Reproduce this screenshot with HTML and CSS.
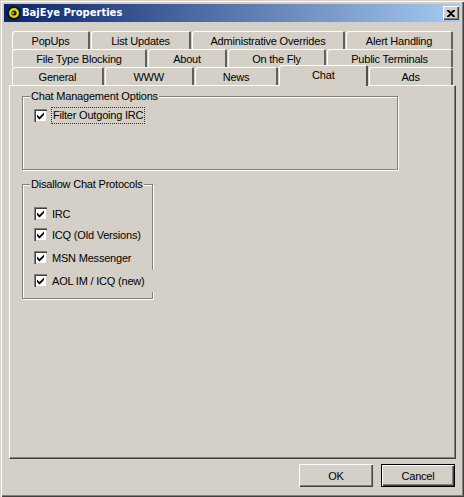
FILE: index.html
```html
<!DOCTYPE html>
<html lang="en">
<head>
    <meta charset="UTF-8">
    <title>BajEye Properties</title>
    <link rel="stylesheet" href="styles.css">
</head>
<body>
    <div class="window">
        <div class="titlebar">
            <svg class="appicon" width="16" height="16" viewBox="0 0 16 16">
                <circle cx="8" cy="8" r="7" fill="#111"/>
                <circle cx="8" cy="8" r="5" fill="#d8d820"/>
                <circle cx="8" cy="8" r="2.6" fill="#222"/>
                <circle cx="7" cy="8" r="1" fill="#d8d820"/>
            </svg>
            <span class="titletext">BajEye Properties</span>
            <div class="closebtn">
                <svg width="8" height="7" viewBox="0 0 8 7">
                    <path d="M0 0h2l2 2 2-2h2v1L5 3.500 8 6v1H6L4 5 2 7H0V6l3-2.500L0 1z" fill="#000"/>
                </svg>
            </div>
        </div>

        <div class="tabs">
            <div class="tabrow">
                <div class="tab w78">PopUps</div>
                <div class="tab w101">List Updates</div>
                <div class="tab w154">Administrative Overrides</div>
                <div class="tab w108">Alert Handling</div>
            </div>
            <div class="tabrow">
                <div class="tab w135">File Type Blocking</div>
                <div class="tab w80">About</div>
                <div class="tab w99">On the Fly</div>
                <div class="tab w127">Public Terminals</div>
            </div>
            <div class="tabrow lastrow">
                <div class="tab w92">General</div>
                <div class="tab w90">WWW</div>
                <div class="tab w85">News</div>
                <div class="tab w89 valgt">Chat</div>
                <div class="tab w85">Ads</div>
            </div>
        </div>

        <div class="panel">
            <div class="group group-mgmt">
                <span class="grouplabel">Chat Management Options</span>
                <label class="check">
                    <span class="box"><svg width="9" height="9" viewBox="0 0 9 9"><path d="M1 3.500l2.500 2.500L8 1.500V4L3.500 8.500 1 6z" fill="#000"/></svg></span>
                    <span class="focus">Filter Outgoing IRC</span>
                </label>
            </div>
            <div class="group group-proto">
                <span class="grouplabel">Disallow Chat Protocols</span>
                <label class="check">
                    <span class="box"><svg width="9" height="9" viewBox="0 0 9 9"><path d="M1 3.500l2.500 2.500L8 1.500V4L3.500 8.500 1 6z" fill="#000"/></svg></span>
                    <span>IRC</span>
                </label>
                <label class="check gap8">
                    <span class="box"><svg width="9" height="9" viewBox="0 0 9 9"><path d="M1 3.500l2.500 2.500L8 1.500V4L3.500 8.500 1 6z" fill="#000"/></svg></span>
                    <span>ICQ (Old Versions)</span>
                </label>
                <label class="check gap10">
                    <span class="box"><svg width="9" height="9" viewBox="0 0 9 9"><path d="M1 3.500l2.500 2.500L8 1.500V4L3.500 8.500 1 6z" fill="#000"/></svg></span>
                    <span>MSN Messenger</span>
                </label>
                <label class="check gap10">
                    <span class="box"><svg width="9" height="9" viewBox="0 0 9 9"><path d="M1 3.500l2.500 2.500L8 1.500V4L3.500 8.500 1 6z" fill="#000"/></svg></span>
                    <span class="overborder">AOL IM / ICQ (new)</span>
                </label>
            </div>
        </div>

        <div class="buttons">
            <button class="btn">OK</button>
            <button class="btn standard">Cancel</button>
        </div>
    </div>
</body>
</html>
```

FILE: styles.css
```css
html, body {
    margin: 0;
    padding: 0;
    background: #d4d0c8;
}

.window {
    box-sizing: border-box;
    width: 464px;
    height: 497px;
    padding: 4px 4px 0 4px;
    background: #d4d0c8;
    font-family: "Liberation Sans", Arial, sans-serif;
    font-size: 11px;
    letter-spacing: -0.2px;
    white-space: nowrap;
    color: #000;
    overflow: hidden;
    box-shadow: inset 1px 1px 0 #d4d0c8, inset 2px 2px 0 #fff, inset -1px -1px 0 #404040, inset -2px -2px 0 #808080;
}

/* title */

.titlebar {
    display: flex;
    align-items: center;
    height: 18px;
    padding: 0 1px 0 2px;
    background: linear-gradient(to right, #0a246a, #a6caf0);
    color: #fff;
}

.titletext {
    font-family: "DejaVu Sans", sans-serif;
    font-size: 10px;
    font-weight: bold;
    letter-spacing: 0;
    margin-top: -1px;
}

.closebtn {
    display: flex;
    align-items: center;
    justify-content: center;
    width: 16px;
    height: 14px;
    margin-left: auto;
    background: #d4d0c8;
    box-shadow: inset 1px 1px 0 #fff, inset -1px -1px 0 #404040, inset -2px -2px 0 #808080;
}

/* tabs */

.tabs {
    margin: 9px 0 0 8px;
    width: 441px;
}

.tabrow {
    display: flex;
    height: 18px;
    gap: 1px;
}

.tab {
    box-sizing: border-box;
    height: 18px;
    padding-top: 2px;
    text-align: center;
    line-height: 14px;
    background: #d4d0c8;
    border-top: 1px solid #fff;
    border-left: 1px solid #fff;
    border-right: 2px solid #606060;
    border-top-left-radius: 3px;
    border-top-right-radius: 2px;
}

.tab.valgt {
    position: relative;
    z-index: 1;
    height: 21px;
    margin-top: -2px;
    padding-top: 2px;
    border-right: 2px solid #505050;
}

.w78 { width: 78px; }
.w80 { width: 79px; }
.w85 { width: 84px; }
.w89 { width: 89px; }
.w90 { width: 89px; }
.w92 { width: 92px; }
.w99 { width: 98px; }
.w101 { width: 100px; }
.w108 { width: 107px; }
.w127 { width: 126px; }
.w135 { width: 135px; }
.w154 { width: 153px; }

/* panel */

.panel {
    box-sizing: border-box;
    width: 447px;
    height: 374px;
    margin-left: 5px;
    padding: 10px 0 0 12px;
    border-top: 1px solid #fff;
    border-left: 1px solid #fff;
    border-right: 1px solid #404040;
    border-bottom: 1px solid #404040;
    box-shadow: inset -1px -1px 0 #808080;
}

.group {
    position: relative;
    box-sizing: border-box;
    border: 1px solid #808080;
    box-shadow: 1px 1px 0 #fff, inset 1px 1px 0 #fff;
}

.group-mgmt {
    width: 376px;
    height: 74px;
    padding: 12px 0 0 11px;
    margin-bottom: 14px;
}

.group-proto {
    width: 131px;
    height: 115px;
    padding: 22px 0 0 11px;
}

.grouplabel {
    position: absolute;
    top: -8px;
    left: 7px;
    padding: 0 1px;
    background: #d4d0c8;
    line-height: 15px;
}

.check {
    display: flex;
    align-items: center;
    height: 13px;
}

.gap8 {
    margin-top: 8px;
}

.gap10 {
    margin-top: 10px;
}

.box {
    box-sizing: border-box;
    display: flex;
    align-items: center;
    justify-content: center;
    flex: none;
    width: 13px;
    height: 13px;
    margin-right: 5px;
    background: #fff;
    box-shadow: inset 1px 1px 0 #808080, inset 2px 2px 0 #404040, inset -1px -1px 0 #d4d0c8;
}

.focus {
    padding: 0 1px;
    outline: 1px dotted #333;
    line-height: 15px;
}

/* label box runs over the group's right edge, as in the dialog */
.overborder {
    padding: 5px 9px 5px 0;
    background: #d4d0c8;
}

/* bottom */

.buttons {
    display: flex;
    justify-content: flex-end;
    gap: 8px;
    margin: 5px 5px 0 0;
}

.btn {
    box-sizing: border-box;
    width: 74px;
    height: 23px;
    padding: 0;
    border: none;
    background: #d4d0c8;
    font: inherit;
    letter-spacing: inherit;
    color: #000;
    box-shadow: inset 1px 1px 0 #fff, inset -1px -1px 0 #404040, inset -2px -2px 0 #808080;
}

.btn.standard {
    width: 74px;
    box-shadow: inset 0 0 0 1px #000, inset 2px 2px 0 #fff, inset -2px -2px 0 #404040, inset -3px -3px 0 #808080;
}
```
